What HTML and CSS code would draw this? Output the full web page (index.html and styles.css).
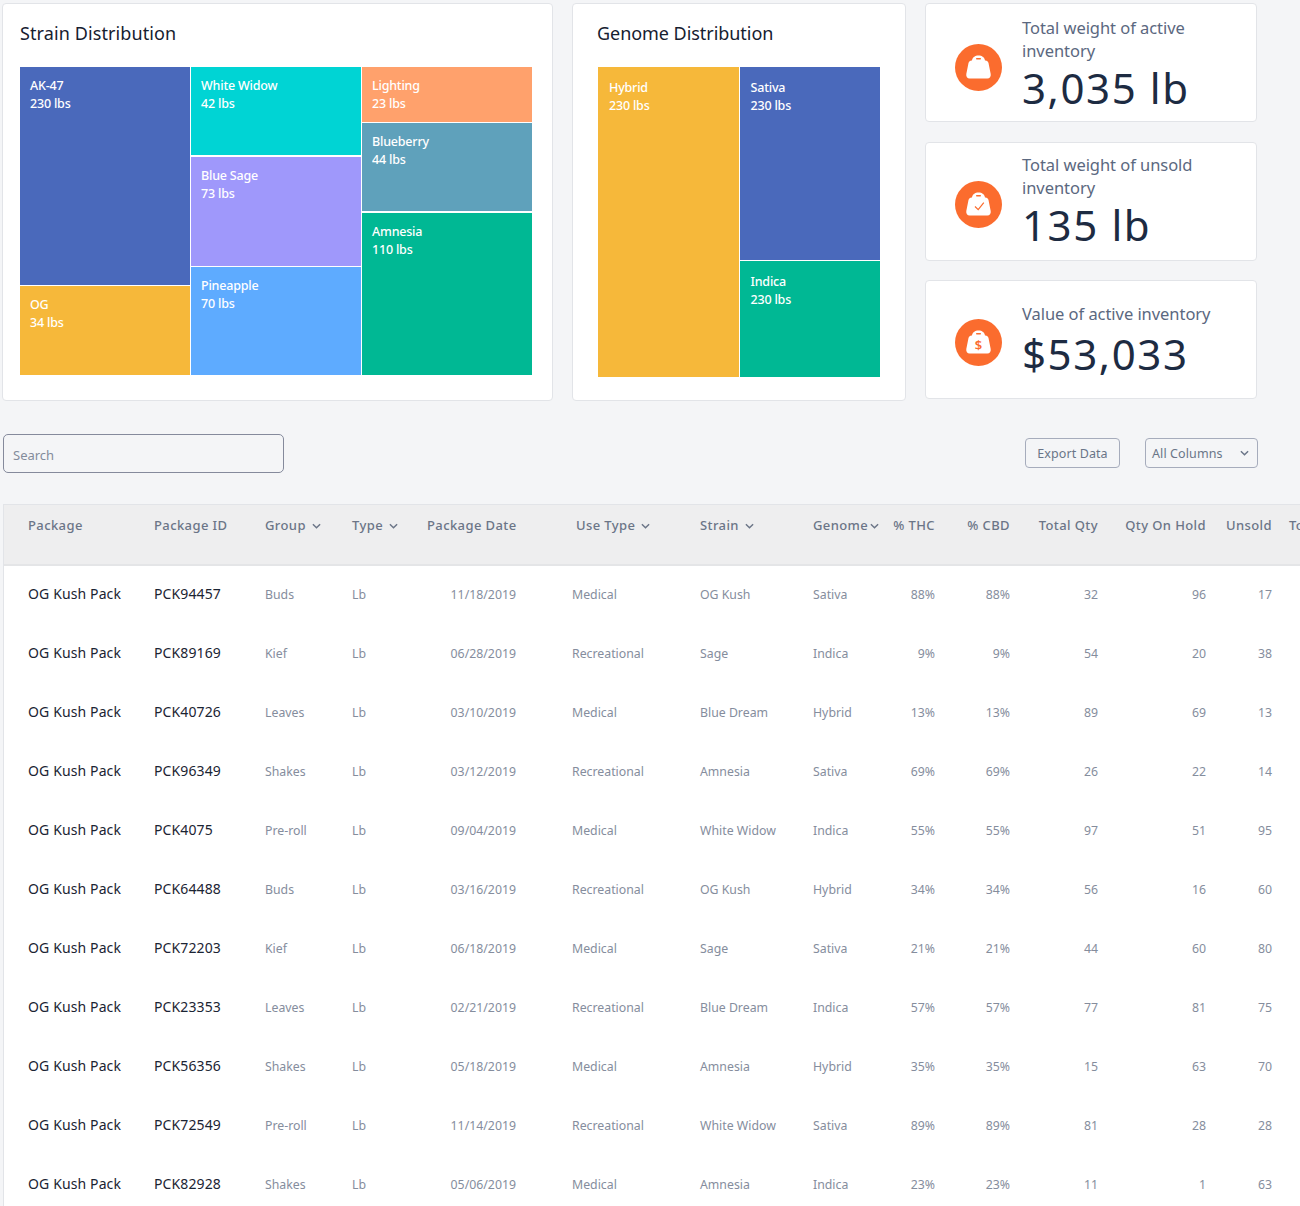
FILE: index.html
```html
<!DOCTYPE html>
<html lang="en">
<head>
<meta charset="utf-8">
<title>Inventory</title>
<link rel="stylesheet" href="styles.css">
</head>
<body>
<div class="page">
  <section class="top">
    <div class="card strain">
      <h2 class="card-title">Strain Distribution</h2>
      <div class="treemap">
        <div class="tm-col">
          <div class="tile t-blue h218"><b>AK-47</b><b>230 lbs</b></div>
          <div class="tile t-yellow h89"><b>OG</b><b>34 lbs</b></div>
        </div>
        <div class="tm-col">
          <div class="tile t-cyan h88"><b>White Widow</b><b>42 lbs</b></div>
          <div class="tile t-purple h109 gap2"><b>Blue Sage</b><b>73 lbs</b></div>
          <div class="tile t-sky h108"><b>Pineapple</b><b>70 lbs</b></div>
        </div>
        <div class="tm-col">
          <div class="tile t-orange h55"><b>Lighting</b><b>23 lbs</b></div>
          <div class="tile t-steel h88"><b>Blueberry</b><b>44 lbs</b></div>
          <div class="tile t-green h162 gap2"><b>Amnesia</b><b>110 lbs</b></div>
        </div>
      </div>
    </div>
    <div class="card genome">
      <h2 class="card-title">Genome Distribution</h2>
      <div class="treemap tall">
        <div class="tm-col">
          <div class="tile t-yellow full"><b>Hybrid</b><b>230 lbs</b></div>
        </div>
        <div class="tm-col">
          <div class="tile t-blue h193"><b>Sativa</b><b>230 lbs</b></div>
          <div class="tile t-green h116"><b>Indica</b><b>230 lbs</b></div>
        </div>
      </div>
    </div>
    <div class="stats">
      <div class="card stat stat-a">
        <svg class="stat-icon" viewBox="0 0 47 47"><circle cx="23.5" cy="23.5" r="23.5" fill="#fb6c2e"/><path fill="#fff" d="M17 16.5c.3-3 3-5 6.500-5s6.200 2 6.500 5h.5c1.500 0 2.500 1 3 2.500l2.200 11c.4 2.500-1 4.500-3.300 4.500H14.600c-2.300 0-3.700-2-3.300-4.500l2.200-11c.5-1.500 1.500-2.500 3-2.500z"/><rect x="21" y="14" width="5" height="1.500" rx=".7" fill="#fb6c2e"/></svg>
        <div class="stat-body"><p class="stat-label">Total weight of active inventory</p><p class="stat-value">3,035 lb</p></div>
      </div>
      <div class="card stat stat-b">
        <svg class="stat-icon" viewBox="0 0 47 47"><circle cx="23.5" cy="23.5" r="23.5" fill="#fb6c2e"/><path fill="#fff" d="M17 16.500c.3-3 3-5 6.500-5s6.200 2 6.500 5h.5c1.500 0 2.500 1 3 2.500l2.200 11c.4 2.500-1 4.500-3.300 4.500H14.600c-2.300 0-3.700-2-3.300-4.500l2.200-11c.5-1.500 1.500-2.500 3-2.500z"/><rect x="21" y="14" width="5" height="1.500" rx=".7" fill="#fb6c2e"/><path fill="none" stroke="#fb6c2e" stroke-width="1.200" d="M20 25.500l3.200 3.200 5.600-7"/></svg>
        <div class="stat-body"><p class="stat-label">Total weight of unsold inventory</p><p class="stat-value">135 lb</p></div>
      </div>
      <div class="card stat stat-c">
        <svg class="stat-icon" viewBox="0 0 47 47"><circle cx="23.5" cy="23.5" r="23.5" fill="#fb6c2e"/><path fill="#fff" d="M17 16.500c.3-3 3-5 6.500-5s6.200 2 6.500 5h.5c1.500 0 2.500 1 3 2.500l2.200 11c.4 2.500-1 4.500-3.300 4.500H14.600c-2.300 0-3.700-2-3.300-4.500l2.200-11c.5-1.500 1.500-2.500 3-2.500z"/><rect x="21" y="14" width="5" height="1.500" rx=".7" fill="#fb6c2e"/><text class="dollar" x="23.500" y="30.500" text-anchor="middle">$</text></svg>
        <div class="stat-body"><p class="stat-label">Value of active inventory</p><p class="stat-value">$53,033</p></div>
      </div>
    </div>
  </section>

  <section class="toolbar">
    <div class="search">Search</div>
    <div class="toolbar-right">
      <button class="btn export">Export Data</button>
      <div class="btn columns">All Columns
        <svg class="chev" viewBox="0 0 10 6"><path d="M1 1l4 4 4-4"/></svg>
      </div>
    </div>
  </section>

  <div class="table-wrap">
    <table class="inv">
      <colgroup>
        <col class="c1"><col class="c2"><col class="c3"><col class="c4"><col class="c5"><col class="c6"><col class="c7"><col class="c8"><col class="c9"><col class="c10"><col class="c11"><col class="c12"><col class="c13"><col class="c14">
      </colgroup>
      <thead>
        <tr>
          <th class="first">Package</th><th>Package ID</th>
          <th>Group <svg class="chev" viewBox="0 0 10 6"><path d="M1 1l4 4 4-4"/></svg></th>
          <th>Type <svg class="chev" viewBox="0 0 10 6"><path d="M1 1l4 4 4-4"/></svg></th>
          <th>Package Date</th>
          <th class="use">Use Type <svg class="chev" viewBox="0 0 10 6"><path d="M1 1l4 4 4-4"/></svg></th>
          <th>Strain <svg class="chev" viewBox="0 0 10 6"><path d="M1 1l4 4 4-4"/></svg></th>
          <th class="tight">Genome <svg class="chev" viewBox="0 0 10 6"><path d="M1 1l4 4 4-4"/></svg></th>
          <th class="num">% THC</th><th class="num">% CBD</th><th class="num">Total Qty</th><th class="num">Qty On Hold</th><th class="num">Unsold</th><th class="last">Total Value</th>
        </tr>
      </thead>
      <tbody>
        <tr><td class="first strong">OG Kush Pack</td><td class="strong">PCK94457</td><td>Buds</td><td>Lb</td><td class="num">11/18/2019</td><td class="use">Medical</td><td>OG Kush</td><td>Sativa</td><td class="num">88%</td><td class="num">88%</td><td class="num">32</td><td class="num">96</td><td class="num">17</td><td></td></tr>
        <tr><td class="first strong">OG Kush Pack</td><td class="strong">PCK89169</td><td>Kief</td><td>Lb</td><td class="num">06/28/2019</td><td class="use">Recreational</td><td>Sage</td><td>Indica</td><td class="num">9%</td><td class="num">9%</td><td class="num">54</td><td class="num">20</td><td class="num">38</td><td></td></tr>
        <tr><td class="first strong">OG Kush Pack</td><td class="strong">PCK40726</td><td>Leaves</td><td>Lb</td><td class="num">03/10/2019</td><td class="use">Medical</td><td>Blue Dream</td><td>Hybrid</td><td class="num">13%</td><td class="num">13%</td><td class="num">89</td><td class="num">69</td><td class="num">13</td><td></td></tr>
        <tr><td class="first strong">OG Kush Pack</td><td class="strong">PCK96349</td><td>Shakes</td><td>Lb</td><td class="num">03/12/2019</td><td class="use">Recreational</td><td>Amnesia</td><td>Sativa</td><td class="num">69%</td><td class="num">69%</td><td class="num">26</td><td class="num">22</td><td class="num">14</td><td></td></tr>
        <tr><td class="first strong">OG Kush Pack</td><td class="strong">PCK4075</td><td>Pre-roll</td><td>Lb</td><td class="num">09/04/2019</td><td class="use">Medical</td><td>White Widow</td><td>Indica</td><td class="num">55%</td><td class="num">55%</td><td class="num">97</td><td class="num">51</td><td class="num">95</td><td></td></tr>
        <tr><td class="first strong">OG Kush Pack</td><td class="strong">PCK64488</td><td>Buds</td><td>Lb</td><td class="num">03/16/2019</td><td class="use">Recreational</td><td>OG Kush</td><td>Hybrid</td><td class="num">34%</td><td class="num">34%</td><td class="num">56</td><td class="num">16</td><td class="num">60</td><td></td></tr>
        <tr><td class="first strong">OG Kush Pack</td><td class="strong">PCK72203</td><td>Kief</td><td>Lb</td><td class="num">06/18/2019</td><td class="use">Medical</td><td>Sage</td><td>Sativa</td><td class="num">21%</td><td class="num">21%</td><td class="num">44</td><td class="num">60</td><td class="num">80</td><td></td></tr>
        <tr><td class="first strong">OG Kush Pack</td><td class="strong">PCK23353</td><td>Leaves</td><td>Lb</td><td class="num">02/21/2019</td><td class="use">Recreational</td><td>Blue Dream</td><td>Indica</td><td class="num">57%</td><td class="num">57%</td><td class="num">77</td><td class="num">81</td><td class="num">75</td><td></td></tr>
        <tr><td class="first strong">OG Kush Pack</td><td class="strong">PCK56356</td><td>Shakes</td><td>Lb</td><td class="num">05/18/2019</td><td class="use">Medical</td><td>Amnesia</td><td>Hybrid</td><td class="num">35%</td><td class="num">35%</td><td class="num">15</td><td class="num">63</td><td class="num">70</td><td></td></tr>
        <tr><td class="first strong">OG Kush Pack</td><td class="strong">PCK72549</td><td>Pre-roll</td><td>Lb</td><td class="num">11/14/2019</td><td class="use">Recreational</td><td>White Widow</td><td>Sativa</td><td class="num">89%</td><td class="num">89%</td><td class="num">81</td><td class="num">28</td><td class="num">28</td><td></td></tr>
        <tr><td class="first strong">OG Kush Pack</td><td class="strong">PCK82928</td><td>Shakes</td><td>Lb</td><td class="num">05/06/2019</td><td class="use">Medical</td><td>Amnesia</td><td>Indica</td><td class="num">23%</td><td class="num">23%</td><td class="num">11</td><td class="num">1</td><td class="num">63</td><td></td></tr>
      </tbody>
    </table>
  </div>
</div>
</body>
</html>
```
FILE: styles.css
```css
* { box-sizing: border-box; }
html, body { margin: 0; padding: 0; }
body { background: #f4f5f7; font-family: "Noto Sans", "Open Sans", sans-serif; }
.page { width: 1300px; height: 1206px; overflow: hidden; padding: 3px 0 0 2px; }

.top { display: flex; align-items: flex-start; }
.card { background: #fff; border: 1px solid #e2e4e8; border-radius: 4px; }
.strain { width: 551px; height: 398px; padding: 0 20px 0 17px; }
.genome { width: 334px; height: 398px; margin-left: 19px; padding: 0 25px 0 25px; }
.card-title { margin: 0; height: 63px; padding: 16px 0 0 0; font-size: 18px; line-height: 26px; font-weight: 400; color: #16202f; letter-spacing: -0.05px; }
.strain .card-title { letter-spacing: 0.1px; }
.genome .card-title { margin-left: -1px; }

.treemap { display: flex; gap: 1px; height: 308px; }
.treemap.tall { height: 310px; }
.tm-col { flex: 1; display: flex; flex-direction: column; gap: 1px; }
.tile { padding: 10px 10px 0; color: #fff; }
.tile b { display: block; font-size: 12.500px; line-height: 18px; font-weight: 500; letter-spacing: -0.2px; }
.tall .tile { padding: 12px 11px 0; }
.gap2 { margin-top: 1px; }
.full { flex: 1; }
.h55 { height: 55px; } .h88 { height: 88px; } .h89 { height: 89px; } .h108 { height: 108px; }
.h109 { height: 109px; } .h116 { height: 116px; } .h162 { height: 162px; } .h193 { height: 193px; } .h218 { height: 218px; }
.t-blue { background: #4a69bb; }
.t-yellow { background: #f6b83a; }
.t-cyan { background: #00d4d4; }
.t-purple { background: #9f98fb; }
.t-sky { background: #5eabff; }
.t-orange { background: #ffa16c; }
.t-steel { background: #5fa1bb; }
.t-green { background: #00b894; }

.stats { margin-left: 19px; display: flex; flex-direction: column; gap: 20px; width: 332px; }
.stat { height: 119px; display: flex; align-items: center; padding-left: 29px; gap: 20px; }
.stat-c { margin-top: -1px; }
.stat-icon { width: 47px; height: 47px; flex: none; margin-top: 5px; }
.stat-a .stat-icon { margin-top: 9px; }
.stat-a .stat-body { margin-top: 4px; }
.stat-c .stat-body { margin-top: 2px; }
.stat-c .stat-value { margin-top: 4px; }
.dollar { font-size: 13px; font-weight: 600; fill: #fb6c2e; font-family: "Noto Sans", sans-serif; }
.stat-label { margin: -1px 0 1px; font-size: 16.500px; line-height: 23px; color: #5b6880; letter-spacing: -0.05px; width: 190px; }
.stat-c .stat-label { width: auto; }
.stat-value { margin: 0; font-size: 42px; line-height: 50px; color: #1d2b42; letter-spacing: 1.6px; }

.toolbar { display: flex; align-items: center; justify-content: space-between; margin-top: 32px; margin-left: 1px; width: 1255px; height: 40px; }
.search { width: 281px; height: 39px; border: 1px solid #858a9c; border-radius: 5px; padding: 0 9px; font-size: 13px; line-height: 41px; color: #838c9c; }
.toolbar-right { display: flex; gap: 25px; align-items: center; }
.btn { height: 30px; border: 1px solid #a6acbc; border-radius: 4px; background: transparent; font: inherit; font-size: 12.500px; color: #6a7588; letter-spacing: 0.1px; padding: 0; }
.export { width: 95px; }
.columns { width: 113px; display: flex; align-items: center; justify-content: space-between; padding: 0 8px 0 6px; }
.chev { width: 9px; height: 6px; fill: none; stroke: currentColor; stroke-width: 1.600; }

.table-wrap { margin-top: 31px; margin-left: 1px; width: 1400px; border-left: 1px solid #e2e4e8; }
.inv { table-layout: fixed; width: 1450px; border-collapse: collapse; }
.c1 { width: 150px; } .c2 { width: 111px; } .c3 { width: 87px; } .c4 { width: 75px; } .c5 { width: 89px; }
.c6 { width: 184px; } .c7 { width: 113px; } .c8 { width: 72px; } .c9 { width: 50px; } .c10 { width: 75px; }
.c11 { width: 88px; } .c12 { width: 108px; } .c13 { width: 66px; } .c14 { width: 182px; }
.inv thead tr { height: 60px; }
.inv th { padding: 11px 0 0; vertical-align: top; text-align: left; font-size: 13px; line-height: 18px; font-weight: 500; color: #6b7587; letter-spacing: 0.4px; white-space: nowrap; background: #eeeeef; border-top: 1px solid #e2e4e8; border-bottom: 2px solid #e4e5e7; }
.inv tbody tr { height: 59px; }
.inv td { padding: 0; font-size: 12.300px; color: #858d9d; white-space: nowrap; background: #fff; }
.inv .first { padding-left: 24px; }
.inv .strong { padding-bottom: 2px; font-size: 14px; color: #1b2433; font-weight: 400; letter-spacing: 0.12px; }
.inv th.num, .inv td.num { text-align: right; }
.inv th.use { padding-left: 60px; }
.inv td.use { padding-left: 56px; }
.inv th.last { padding-left: 17px; }
.inv th .chev { margin-left: 2px; vertical-align: 1px; }
.inv th.tight .chev { margin-left: -2px; }
```
